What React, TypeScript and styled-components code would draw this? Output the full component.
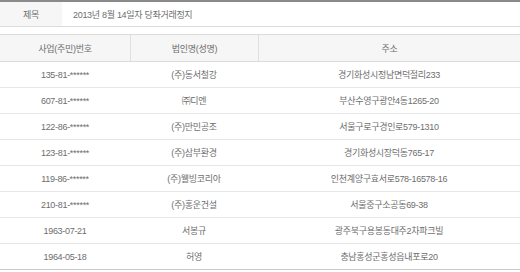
import styled, { createGlobalStyle } from "styled-components";

const Global = createGlobalStyle`
  html, body {
    margin: 0;
    padding: 0;
    background: #fff;
  }
  body {
    font-family: "Liberation Sans", "Noto Sans CJK KR", sans-serif;
  }
`

const Page = styled.div`
  width: 520px;
  height: 272px;
  overflow: hidden;
  color: #6e6e6e;
  font-size: 9px;
  letter-spacing: -0.3px;
`

const TitleTable = styled.div`
  display: grid;
  grid-template-columns: 62px 1fr;
  border-top: 2px solid #8a8a8a;
  border-bottom: 1px solid #dcdcdc;
  height: 24px;
`

const TitleLabel = styled.div`
  background: #f6f6f6;
  display: flex;
  align-items: center;
  justify-content: center;
`

const TitleValue = styled.div`
  display: flex;
  align-items: center;
  padding-left: 11px;
`

const List = styled.div`
  margin-top: 7px;
  border-top: 1px solid #dcdcdc;
  border-bottom: 1px solid #c8c8c8;
`

const Row = styled.div<{ $head?: boolean }>`
  display: grid;
  grid-template-columns: 130px 128px 1fr;
  height: ${p => (p.$head ? 26 : 25)}px;
  background: ${p => (p.$head ? "#f6f6f6" : "#fff")};
  border-bottom: 1px solid ${p => (p.$head ? "#dcdcdc" : "#e6e6e6")};
  &:last-child {
    border-bottom: none;
  }
`

const Cell = styled.div<{ $head?: boolean }>`
  display: flex;
  align-items: center;
  justify-content: center;
  border-left: ${p => (p.$head ? "1px solid #e0e0e0" : "none")};
  &:first-child {
    border-left: none;
  }
`

const rows = [
  ["135-81-******", "(주)동서철강", "경기화성시정남면덕절리233"],
  ["607-81-******", "㈜디엔", "부산수영구광안4동1265-20"],
  ["122-86-******", "(주)만민공조", "서울구로구경인로579-1310"],
  ["123-81-******", "(주)삼부환경", "경기화성시장덕동765-17"],
  ["119-86-******", "(주)웰빙코리아", "인천계양구효서로578-16578-16"],
  ["210-81-******", "(주)홍운건설", "서울중구소공동69-38"],
  ["1963-07-21", "서봉규", "광주북구용봉동대주2차파크빌"],
  ["1964-05-18", "허영", "충남홍성군홍성읍내포로20"],
]

export default function App() {
  return (
    <Page>
      <Global />
      <TitleTable>
        <TitleLabel>제목</TitleLabel>
        <TitleValue>2013년 8월 14일자 당좌거래정지</TitleValue>
      </TitleTable>
      <List>
        <Row $head>
          <Cell $head>사업(주민)번호</Cell>
          <Cell $head>법인명(성명)</Cell>
          <Cell $head>주소</Cell>
        </Row>
        {rows.map(r => (
          <Row key={r[0]}>
            <Cell>{r[0]}</Cell>
            <Cell>{r[1]}</Cell>
            <Cell>{r[2]}</Cell>
          </Row>
        ))}
      </List>
    </Page>
  )
}
